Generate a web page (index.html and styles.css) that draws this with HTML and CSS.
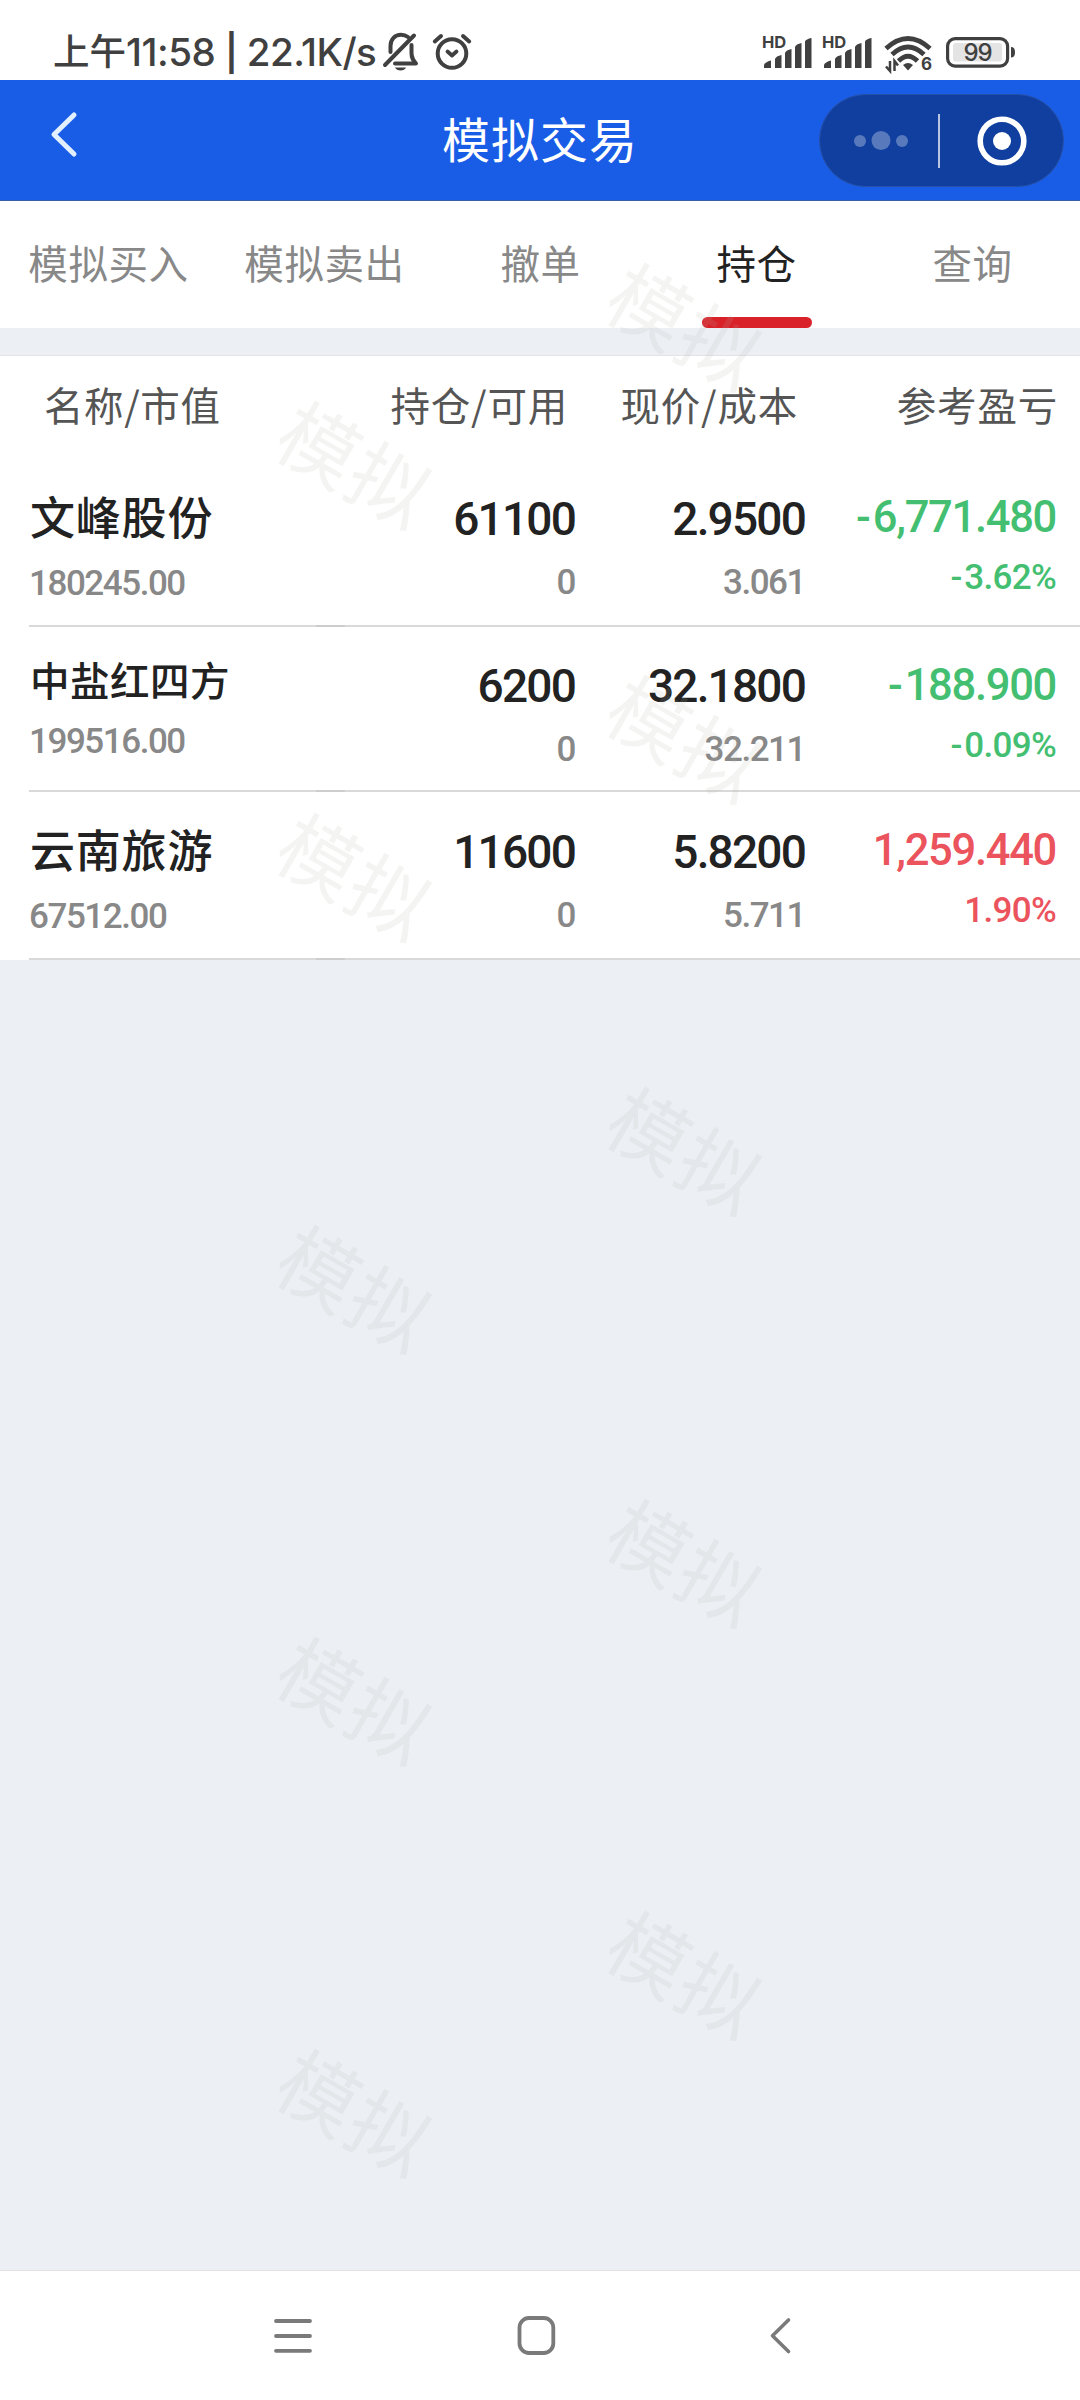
FILE: index.html
```html
<!DOCTYPE html>
<html lang="zh-CN">
  <head>
    <meta charset="UTF-8" />
    <meta name="viewport" content="width=device-width, initial-scale=1.0" />
    <title>模拟交易</title>
    <link rel="stylesheet" href="styles.css">
  </head>
  <body>
    <div class="app">
      <div class="status-bar">
        <div class="status-left">
          <span class="status-cn">上午</span><span class="status-text">11:58 <span class="status-sep">|</span> 22.1K/s</span>
          <svg class="icon-bell" width="36" height="40" viewBox="0 0 36 40" fill="none" stroke="#404040" stroke-width="4">
            <path d="M7.500 20V14C7.500 7 12 2.800 18 2.800C21 2.800 23 3.500 25 5" stroke-linecap="round" />
            <path d="M28.500 13V21C28.500 26 30 28 33 31.500H12" stroke-linejoin="round" stroke-linecap="round" />
            <path d="M2 33L31 3.500" stroke-linecap="round" />
            <path d="M12 35.500H23C21.500 39.500 13.500 39.500 12 35.500Z" fill="#404040" stroke="none" />
          </svg>
          <svg class="icon-alarm" width="40" height="40" viewBox="0 0 40 40" fill="none" stroke="#404040" stroke-linecap="round" stroke-linejoin="round">
            <circle cx="20" cy="21.500" r="14.300" stroke-width="4" />
            <path d="M15.500 19.500L20 23.500L24.500 19.500" stroke-width="3.800" />
            <path d="M2.800 9.500L9 4M37.200 9.500L31 4" stroke-width="4" />
          </svg>
        </div>
        <div class="status-right">
          <svg width="50" height="36" viewBox="0 0 50 36" fill="#404040">
            <text class="hd" x="0" y="14">HD</text>
            <path d="M2 34V31Q3 28 9 26.500V34ZM13 34V25Q14 22 19.500 21V34ZM23 34V19Q24 16 29.500 15V34ZM33 34V13Q34 10 39.500 9V34ZM43 34V7.500Q44 5 49.500 4V34Z" />
          </svg>
          <svg width="50" height="36" viewBox="0 0 50 36" fill="#404040">
            <text class="hd" x="0" y="14">HD</text>
            <path d="M2 34V31Q3 28 9 26.500V34ZM13 34V25Q14 22 19.500 21V34ZM23 34V19Q24 16 29.500 15V34ZM33 34V13Q34 10 39.500 9V34ZM43 34V7.500Q44 5 49.500 4V34Z" />
          </svg>
          <svg class="icon-wifi" width="48" height="38" viewBox="0 0 48 38" fill="none" stroke="#404040">
            <path d="M2 13.500Q24 -6.500 46 13.500M8 19.500Q24 4.500 40 19.500M14.500 26Q24 16.500 33.500 26" stroke-width="4.800" />
            <path d="M19 30Q24 26 29 30L24 35.500Z" fill="#404040" stroke="none" />
            <path d="M6 26V36L2 31.500M10.500 36V26L14 30.500" stroke-width="2.500" />
            <text class="wifi-num" x="37" y="35">6</text>
          </svg>
          <svg class="icon-battery" width="70" height="32" viewBox="0 0 70 32">
            <rect x="1.600" y="2.600" width="60" height="27.500" rx="7.500" fill="none" stroke="#404040" stroke-width="3.200" />
            <rect x="7" y="7" width="49" height="18.500" rx="3" fill="#e4e4e4" />
            <path d="M65 11Q69 11 69 16.200Q69 21.500 65 21.500Z" fill="#404040" />
            <text class="battery-num" x="31.500" y="25" text-anchor="middle">99</text>
          </svg>
        </div>
      </div>

      <div class="title-bar">
        <svg class="back" width="30" height="48" viewBox="0 0 30 48" fill="none" stroke="#e2efff" stroke-width="5" stroke-linecap="round" stroke-linejoin="round">
          <path d="M24 5L4 24.500L24 44" />
        </svg>
        <h1>模拟交易</h1>
        <div class="capsule">
          <svg width="56" height="20" viewBox="0 0 56 20" fill="#587abd">
            <circle cx="7" cy="10" r="6" />
            <circle cx="28" cy="9.500" r="9.500" />
            <circle cx="49" cy="10" r="6" />
          </svg>
          <div class="capsule-line"></div>
          <svg width="50" height="50" viewBox="0 0 50 50">
            <circle cx="25" cy="25" r="21.800" fill="none" stroke="#fff" stroke-width="5.600" />
            <circle cx="25" cy="25" r="9" fill="#fff" />
          </svg>
        </div>
      </div>

      <div class="tabs">
        <div class="tab">模拟买入</div>
        <div class="tab">模拟卖出</div>
        <div class="tab">撤单</div>
        <div class="tab active">持仓</div>
        <div class="tab">查询</div>
      </div>

      <div class="holdings">
        <div class="table-head">
          <span>名称/市值</span>
          <span>持仓/可用</span>
          <span>现价/成本</span>
          <span>参考盈亏</span>
        </div>

        <div class="row">
          <div class="cell name-cell">
            <div class="name">文峰股份</div>
            <div class="sub">180245.00</div>
          </div>
          <div class="cell">
            <div class="num">61100</div>
            <div class="sub">0</div>
          </div>
          <div class="cell">
            <div class="num">2.9500</div>
            <div class="sub">3.061</div>
          </div>
          <div class="cell profit down">
            <div class="num">-6,771.480</div>
            <div class="sub">-3.62%</div>
          </div>
        </div>

        <div class="row compact">
          <div class="cell name-cell">
            <div class="name">中盐红四方</div>
            <div class="sub">199516.00</div>
          </div>
          <div class="cell">
            <div class="num">6200</div>
            <div class="sub">0</div>
          </div>
          <div class="cell">
            <div class="num">32.1800</div>
            <div class="sub">32.211</div>
          </div>
          <div class="cell profit down">
            <div class="num">-188.900</div>
            <div class="sub">-0.09%</div>
          </div>
        </div>

        <div class="row">
          <div class="cell name-cell">
            <div class="name">云南旅游</div>
            <div class="sub">67512.00</div>
          </div>
          <div class="cell">
            <div class="num">11600</div>
            <div class="sub">0</div>
          </div>
          <div class="cell">
            <div class="num">5.8200</div>
            <div class="sub">5.711</div>
          </div>
          <div class="cell profit up">
            <div class="num">1,259.440</div>
            <div class="sub">1.90%</div>
          </div>
        </div>
      </div>

      <div class="nav-bar">
        <svg width="38" height="40" viewBox="0 0 38 40" stroke="#7a7a7a" stroke-width="3.800" stroke-linecap="round">
          <path d="M2 5H36M2 20H36M2 34.800H36" />
        </svg>
        <svg width="38" height="40" viewBox="0 0 38 40" fill="none" stroke="#7a7a7a" stroke-width="3.800">
          <rect x="2.500" y="2" width="33.800" height="35" rx="9.500" />
        </svg>
        <svg width="38" height="40" viewBox="0 0 38 40" fill="none" stroke="#7a7a7a" stroke-width="3.600" stroke-linecap="round" stroke-linejoin="round">
          <path d="M28.500 4L12.500 19.800L28.500 35.500" />
        </svg>
      </div>

      <!-- watermark layer above the page -->
      <div class="watermark">
        <div class="marks marks-left">
          <span>模拟</span>
          <span>模拟</span>
          <span>模拟</span>
          <span>模拟</span>
          <span>模拟</span>
        </div>
        <div class="marks marks-right">
          <span>模拟</span>
          <span>模拟</span>
          <span>模拟</span>
          <span>模拟</span>
          <span>模拟</span>
        </div>
      </div>
    </div>
  </body>
</html>
```
FILE: styles.css
```css
* {
    box-sizing: border-box;
}

body {
    margin: 0;
    background: #ecf0f5;
    font-family: "Noto Sans CJK SC", sans-serif;
    color: #222;
}

svg {
    display: block;
    flex: none;
    overflow: visible;
}

.app {
    position: relative;
    width: 1080px;
    height: 2400px;
    display: flex;
    flex-direction: column;
    overflow: hidden;
}

/* status bar */
.status-bar {
    height: 80px;
    padding: 24px 64px 0 53px;
    display: flex;
    justify-content: space-between;
    background: #fff;
    color: #404040;
}

.status-left,
.status-right {
    display: flex;
    align-items: center;
    height: 56px;
}

.status-left {
    width: 425px;
}

.status-cn {
    font-size: 36.5px;
    font-weight: 500;
    line-height: 52px;
    height: 56px;
}

.status-text {
    width: 249px;
    font-family: Inter, sans-serif;
    font-size: 38.5px;
    font-weight: 500;
    letter-spacing: -0.5px;
    line-height: 56px;
    white-space: pre;
}

.status-sep {
    display: inline-block;
    width: 12px;
    font-size: 36px;
    font-weight: 600;
    line-height: 40px;
    text-align: center;
}

.icon-bell {
    margin-left: 8px;
}

.icon-alarm {
    margin-left: 13px;
}

.status-right {
    gap: 10px;
}

.icon-wifi {
    margin-left: 2px;
    margin-top: 3px;
}

.icon-battery {
    margin-left: 4px;
}

.hd {
    font: 700 16.5px Inter, sans-serif;
}

.wifi-num {
    font: 700 17px Inter, sans-serif;
    fill: #404040;
    stroke: none;
}

.battery-num {
    font: 500 24px Inter, sans-serif;
    letter-spacing: -1px;
    fill: #404040;
}

/* title bar */
.title-bar {
    height: 121px;
    display: grid;
    grid-template-columns: 300px 1fr 300px;
    background: #195de6;
    border-bottom: 1px solid #375fa8;
}

.back {
    margin: 30px 0 0 50px;
}

.title-bar h1 {
    margin: 0;
    text-align: center;
    font-size: 48px;
    font-weight: 400;
    letter-spacing: 1px;
    line-height: 115px;
    color: #fff;
}

.capsule {
    width: 245px;
    height: 93px;
    margin: 14px 16px 0 auto;
    padding: 0 36px 0 33px;
    display: flex;
    align-items: center;
    justify-content: space-between;
    border: 1px solid #2751a8;
    border-radius: 47px;
    background: #103f9f;
}

.capsule-line {
    width: 2px;
    height: 54px;
    margin-left: -8px;
    background: #b7c5e2;
}

/* tabs */
.tabs {
    height: 127px;
    display: grid;
    grid-template-columns: repeat(5, 1fr);
    background: #fff;
}

.tab {
    display: flex;
    flex-direction: column;
    align-items: center;
    font-size: 39.5px;
    letter-spacing: 0.6px;
    line-height: 116px;
    padding: 3px 0 0 1px;
    color: #888;
}

.tab.active {
    padding-top: 0;
    line-height: 122px;
    color: #222;
    justify-content: space-between;
}

.tab.active::after {
    content: "";
    width: 110px;
    height: 11px;
    margin-top: -6px;
    border-radius: 6px;
    background: #d92129;
}

/* holdings table */
.holdings {
    margin-top: 27px;
    border-top: 1px solid #e1e3e5;
    background: #fff;
}

.table-head {
    height: 103px;
    padding: 0 22px 0 44px;
    display: grid;
    grid-template-columns: 193px 331px 230px 1fr;
    text-align: right;
    font-size: 39.5px;
    letter-spacing: 0.8px;
    line-height: 95px;
    color: #555;
}

.table-head span:first-child {
    text-align: left;
    letter-spacing: 0.6px;
}

.row {
    height: 168px;
    margin-left: 29px;
    padding-right: 24px;
    display: grid;
    grid-template-columns: 280px 266px 230px 1fr;
    border-bottom: 2px solid;
    border-image: linear-gradient(to right, #d9d9d9 288px, #cdcdcd 288px 317px, #d9d9d9 317px) 2;
    text-align: right;
    font-family: Roboto, sans-serif;
}

.cell {
    padding-top: 30px;
}

.num {
    font-size: 46px;
    font-weight: 500;
    letter-spacing: -1.8px;
    line-height: 60px;
}

.sub {
    margin-top: 14px;
    font-size: 35px;
    font-weight: 500;
    letter-spacing: -1.45px;
    line-height: 40px;
    color: #888;
}

.name-cell {
    padding-top: 27px;
    text-align: left;
}

.name {
    padding-left: 1px;
    font-family: "Noto Sans CJK SC", sans-serif;
    font-size: 45px;
    font-weight: 500;
    letter-spacing: 0.8px;
    line-height: 60px;
}

.name-cell .sub {
    margin-top: 18px;
}

.profit {
    padding-top: 29px;
}

.profit .num {
    font-size: 43.5px;
    letter-spacing: -1.3px;
}

.profit .sub {
    margin-top: 10px;
    letter-spacing: -0.7px;
}

.down .num,
.down .sub {
    color: #44bf72;
}

/* wider minus sign */
.down .num::first-letter,
.down .sub::first-letter {
    letter-spacing: 2px;
}

.up .num,
.up .sub {
    color: #eb535d;
}

.row.compact {
    height: 165px;
}

.compact .cell {
    padding-top: 29px;
}

.compact .name-cell {
    padding-top: 22px;
}

.compact .name {
    font-size: 39.5px;
    letter-spacing: 0.5px;
}

.compact .name-cell .sub {
    margin-top: 13px;
}

/* system navigation */
.nav-bar {
    height: 130px;
    margin-top: auto;
    padding: 0 282px 0 274px;
    display: flex;
    justify-content: space-between;
    align-items: center;
    border-top: 1px solid #e2e2e2;
    background: #fff;
}

/* watermark */
.watermark {
    position: absolute;
    inset: 0;
    pointer-events: none;
    color: rgba(180, 184, 176, 0.15);
}

.marks {
    position: absolute;
    display: flex;
    flex-direction: column;
    gap: 292px;
}

.marks span {
    width: 170px;
    height: 120px;
    font-size: 79px;
    letter-spacing: 2px;
    line-height: 120px;
    text-align: center;
    transform: rotate(30deg);
}

.marks-left {
    left: 272px;
    top: 402px;
}

.marks-right {
    left: 602px;
    top: 264px;
}
```
